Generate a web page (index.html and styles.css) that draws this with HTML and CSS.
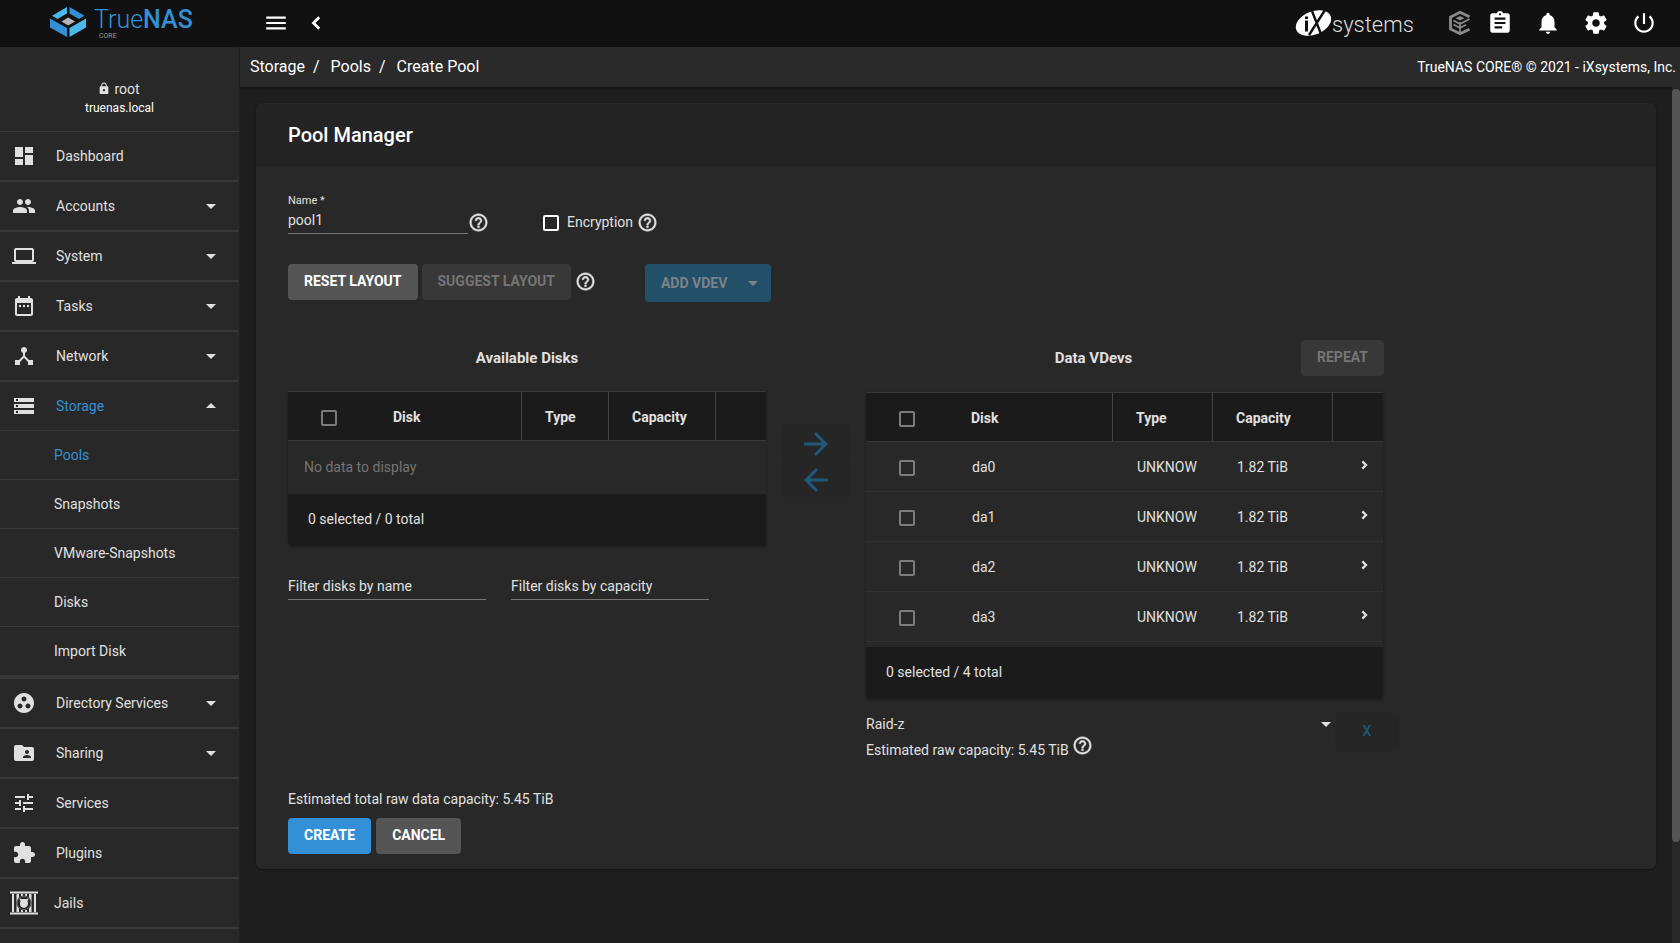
FILE: index.html
```html
<!DOCTYPE html>
<html lang="en">
<head>
<meta charset="utf-8">
<title>TrueNAS - Create Pool</title>
<link rel="stylesheet" href="styles.css">
</head>
<body>
<svg class="defs" aria-hidden="true">
  <symbol id="i-help" viewBox="0 0 24 24"><path d="M11 18h2v-2h-2v2zm1-16C6.480 2 2 6.480 2 12s4.480 10 10 10 10-4.480 10-10S17.520 2 12 2zm0 18c-4.410 0-8-3.590-8-8s3.590-8 8-8 8 3.590 8 8-3.590 8-8 8zm0-14c-2.210 0-4 1.790-4 4h2c0-1.100.9-2 2-2s2 .9 2 2c0 2-3 1.750-3 5h2c0-2.250 3-2.500 3-5 0-2.210-1.790-4-4-4z" stroke="currentColor" stroke-width=".5"/></symbol>
  <symbol id="i-down" viewBox="0 0 24 24"><path d="M7 10l5 5 5-5z"/></symbol>
  <symbol id="i-up" viewBox="0 0 24 24"><path d="M7 14l5-5 5 5z"/></symbol>
  <symbol id="i-right" viewBox="0 0 24 24"><path d="M9.500 6.500L15 12l-5.500 5.500" fill="none" stroke="currentColor" stroke-width="3.500"/></symbol>
</svg>
<div class="app">
  <header class="topbar">
    <a class="brand" href="#" aria-label="TrueNAS Core">
      <svg class="brand-mark" viewBox="0 0 36 30">
        <path fill="#4cb8ea" d="M17 0v6.500L7.500 12 2 8.800z"/>
        <path fill="#3390d6" d="M19.500 0v6.500L29 12l5.500-3.200z"/>
        <path fill="#3390d6" d="M0 11.500l17 9.500v9L0 20.500z"/>
        <path fill="#4cb8ea" d="M36 11.500L19.500 21v9L36 20.500z"/>
        <path fill="#b4b4b4" d="M18.200 10.500l6.800 4-6.800 4-6.700-4z"/>
      </svg>
      <span class="brand-name"><span class="brand-word">True<b>NAS</b></span><small>CORE</small></span>
    </a>
    <div class="topbar-main">
      <button class="icon-btn" aria-label="Toggle menu"><svg viewBox="0 0 24 24"><path d="M3 18h18v-2H3v2zm0-5h18v-2H3v2zm0-7v2h18V6H3z"/></svg></button>
      <button class="icon-btn" aria-label="Collapse menu"><svg viewBox="0 0 24 24"><path d="M15 6.700L9.700 12l5.300 5.300" fill="none" stroke="currentColor" stroke-width="2.600"/></svg></button>
      <span class="spacer"></span>
      <a class="ix" href="#" aria-label="iXsystems">
        <svg viewBox="0 0 116 28">
          <ellipse cx="18.500" cy="14" rx="18.500" ry="11.500" transform="rotate(-22 18.500 14)" fill="#fff"/>
          <path d="M10 11.500h3v11h-3zM10 7.500h3v2.500h-3z" fill="#111"/>
          <path d="M17 2l9 23M30 1L14 26" stroke="#111" stroke-width="2.400" fill="none"/>
          <text x="37" y="23" class="ix-text">systems</text>
          <path d="M112.500 11.500h2.500" stroke="#bbb" stroke-width="1"/>
        </svg>
      </a>
      <button class="icon-btn tc" aria-label="TrueCommand"><svg viewBox="0 0 24 26"><path fill="none" stroke="#8a8a8a" stroke-width="2.800" d="M22.500 6.800L13 2.200 3.500 7v12l9.500 4.800 9.500-4.600"/><path fill="#8a8a8a" d="M13 6l4.500 2.300-4.500 2.300-4.500-2.300z"/><path fill="none" stroke="#8a8a8a" stroke-width="1.700" d="M6.500 10.500L13 14l9.500-5M6.500 14.500L13 18l6-3.200M13 12v10"/></svg></button>
      <button class="icon-btn" aria-label="Task manager"><svg viewBox="0 0 24 24"><path d="M19 3h-4.180C14.400 1.840 13.300 1 12 1c-1.300 0-2.400.84-2.820 2H5c-1.100 0-2 .9-2 2v14c0 1.100.9 2 2 2h14c1.100 0 2-.9 2-2V5c0-1.100-.9-2-2-2zm-7 0c.55 0 1 .45 1 1s-.45 1-1 1-1-.45-1-1 .45-1 1-1zm2 14H7v-2h7v2zm3-4H7v-2h10v2zm0-4H7V7h10v2z"/></svg></button>
      <button class="icon-btn" aria-label="Notifications"><svg viewBox="0 0 24 24"><path d="M12 22c1.100 0 2-.9 2-2h-4c0 1.100.89 2 2 2zm6-6v-5c0-3.070-1.640-5.640-4.500-6.320V4c0-.83-.67-1.500-1.500-1.500s-1.500.67-1.500 1.500v.68C7.630 5.360 6 7.920 6 11v5l-2 2v1h16v-1l-2-2z"/></svg></button>
      <button class="icon-btn" aria-label="Settings"><svg viewBox="0 0 24 24"><path d="M19.430 12.980c.04-.32.070-.64.070-.98s-.03-.66-.07-.98l2.110-1.650c.19-.15.24-.42.12-.64l-2-3.460c-.12-.22-.39-.3-.61-.22l-2.490 1c-.52-.4-1.080-.73-1.690-.98l-.38-2.650C14.460 2.180 14.250 2 14 2h-4c-.25 0-.46.18-.49.42l-.38 2.650c-.61.25-1.170.59-1.690.98l-2.490-1c-.23-.09-.49 0-.61.22l-2 3.460c-.13.22-.07.49.12.64l2.110 1.650c-.04.32-.07.65-.07.980s.03.66.07.98l-2.110 1.650c-.19.15-.24.42-.12.64l2 3.460c.12.22.39.3.61.22l2.490-1c.52.4 1.080.73 1.690.98l.38 2.650c.03.24.24.42.49.42h4c.25 0 .46-.18.49-.42l.38-2.650c.61-.25 1.170-.59 1.690-.98l2.490 1c.23.09.49 0 .61-.22l2-3.460c.12-.22.07-.49-.12-.64l-2.110-1.650zM12 15.500c-1.930 0-3.500-1.570-3.500-3.500s1.570-3.500 3.500-3.500 3.500 1.570 3.500 3.500-1.570 3.500-3.500 3.500z"/></svg></button>
      <button class="icon-btn" aria-label="Power"><svg viewBox="0 0 24 24"><path d="M13 3h-2v10h2V3zm4.830 2.170l-1.420 1.420C17.990 7.860 19 9.810 19 12c0 3.870-3.130 7-7 7s-7-3.130-7-7c0-2.190 1.010-4.140 2.580-5.420L6.170 5.170C4.230 6.820 3 9.260 3 12c0 4.970 4.030 9 9 9s9-4.030 9-9c0-2.740-1.230-5.180-3.170-6.830z"/></svg></button>
    </div>
  </header>

  <aside class="sidebar">
    <div class="user">
      <div class="user-name"><svg viewBox="3 0 18 22"><path d="M18 8h-1V6c0-2.760-2.240-5-5-5S7 3.240 7 6v2H6c-1.100 0-2 .9-2 2v10c0 1.100.9 2 2 2h12c1.100 0 2-.9 2-2V10c0-1.100-.9-2-2-2zm-6 9c-1.100 0-2-.9-2-2s.9-2 2-2 2 .9 2 2-.9 2-2 2zm3.100-9H8.900V6c0-1.710 1.390-3.100 3.100-3.100 1.710 0 3.100 1.390 3.100 3.100v2z"/></svg>root</div>
      <div class="user-host">truenas.local</div>
    </div>
    <nav>
      <ul class="menu">
        <li><a href="#"><svg class="mi" viewBox="0 0 24 24"><path d="M3 13h8V3H3v10zm0 8h8v-6H3v6zm10 0h8V11h-8v10zm0-18v6h8V3h-8z"/></svg><span>Dashboard</span></a></li>
        <li><a href="#"><svg class="mi" viewBox="0 0 24 24"><path d="M16 11c1.660 0 2.990-1.340 2.990-3S17.660 5 16 5c-1.660 0-3 1.340-3 3s1.340 3 3 3zm-8 0c1.660 0 2.990-1.340 2.990-3S9.660 5 8 5C6.340 5 5 6.340 5 8s1.340 3 3 3zm0 2c-2.330 0-7 1.170-7 3.500V19h14v-2.500c0-2.330-4.670-3.500-7-3.500zm8 0c-.29 0-.62.02-.97.050 1.160.84 1.970 1.970 1.970 3.450V19h6v-2.500c0-2.330-4.670-3.500-7-3.500z"/></svg><span>Accounts</span><svg class="caret"><use href="#i-down"/></svg></a></li>
        <li><a href="#"><svg class="mi" viewBox="0 0 24 24"><path d="M20 18c1.100 0 1.990-.9 1.990-2L22 6c0-1.100-.9-2-2-2H4c-1.100 0-2 .9-2 2v10c0 1.100.9 2 2 2H0v2h24v-2h-4zM4 6h16v10H4V6z"/></svg><span>System</span><svg class="caret"><use href="#i-down"/></svg></a></li>
        <li><a href="#"><svg class="mi" viewBox="0 0 24 24"><path d="M9 11H7v2h2v-2zm4 0h-2v2h2v-2zm4 0h-2v2h2v-2zm2-7h-1V2h-2v2H8V2H6v2H5c-1.110 0-1.990.9-1.990 2L3 20c0 1.100.89 2 2 2h14c1.100 0 2-.9 2-2V6c0-1.100-.9-2-2-2zm0 16H5V9h14v11z"/></svg><span>Tasks</span><svg class="caret"><use href="#i-down"/></svg></a></li>
        <li><a href="#"><svg class="mi" viewBox="0 0 24 24"><path d="M17 16l-4-4V8.820C14.160 8.400 15 7.300 15 6c0-1.660-1.340-3-3-3S9 4.340 9 6c0 1.300.84 2.400 2 2.820V12l-4 4H3v5h5v-3.050l4-4.200 4 4.200V21h5v-5h-4z"/></svg><span>Network</span><svg class="caret"><use href="#i-down"/></svg></a></li>
        <li class="open"><a class="active" href="#"><svg class="mi" viewBox="0 0 24 24"><path d="M2 20h20v-4H2v4zm2-3h2v2H4v-2zM2 4v4h20V4H2zm4 3H4V5h2v2zm-4 7h20v-4H2v4zm2-3h2v2H4v-2z"/></svg><span>Storage</span><svg class="caret"><use href="#i-up"/></svg></a>
          <ul class="submenu">
            <li><a class="active" href="#">Pools</a></li>
            <li><a href="#">Snapshots</a></li>
            <li><a href="#">VMware-Snapshots</a></li>
            <li><a href="#">Disks</a></li>
            <li><a href="#">Import Disk</a></li>
          </ul>
        </li>
        <li><a href="#"><svg class="mi" viewBox="0 0 24 24"><path d="M12 2C6.480 2 2 6.480 2 12s4.480 10 10 10 10-4.480 10-10S17.520 2 12 2zM8 17.500c-1.380 0-2.500-1.120-2.500-2.500s1.120-2.500 2.500-2.500 2.500 1.120 2.500 2.500-1.120 2.500-2.500 2.500zM9.500 8c0-1.380 1.120-2.500 2.500-2.500s2.500 1.120 2.500 2.500-1.120 2.500-2.500 2.500S9.500 9.380 9.500 8zm6.500 9.500c-1.380 0-2.500-1.120-2.500-2.500s1.120-2.500 2.500-2.500 2.500 1.120 2.500 2.500-1.120 2.500-2.500 2.500z"/></svg><span>Directory Services</span><svg class="caret"><use href="#i-down"/></svg></a></li>
        <li><a href="#"><svg class="mi" viewBox="0 0 24 24"><path d="M20 6h-8l-2-2H4c-1.100 0-1.990.9-1.990 2L2 18c0 1.100.9 2 2 2h16c1.100 0 2-.9 2-2V8c0-1.100-.9-2-2-2zm-5 3c1.100 0 2 .9 2 2s-.9 2-2 2-2-.9-2-2 .9-2 2-2zm4 8h-8v-1c0-1.330 2.670-2 4-2s4 .67 4 2v1z"/></svg><span>Sharing</span><svg class="caret"><use href="#i-down"/></svg></a></li>
        <li><a href="#"><svg class="mi" viewBox="0 0 24 24"><path d="M3 17v2h6v-2H3zM3 5v2h10V5H3zm10 16v-2h8v-2h-8v-2h-2v6h2zM7 9v2H3v2h4v2h2V9H7zm14 4v-2H11v2h10zm-6-4h2V7h4V5h-4V3h-2v6z"/></svg><span>Services</span></a></li>
        <li><a href="#"><svg class="mi" viewBox="0 0 24 24"><path d="M20.500 11H19V7c0-1.100-.9-2-2-2h-4V3.500C13 2.120 11.880 1 10.500 1S8 2.120 8 3.500V5H4c-1.100 0-1.990.9-1.990 2v3.800H3.500c1.490 0 2.700 1.210 2.700 2.700s-1.210 2.700-2.700 2.700H2V20c0 1.100.9 2 2 2h3.800v-1.500c0-1.490 1.210-2.700 2.700-2.700 1.490 0 2.700 1.210 2.700 2.700V22H17c1.100 0 2-.9 2-2v-4h1.500c1.380 0 2.500-1.120 2.500-2.500S21.880 11 20.500 11z"/></svg><span>Plugins</span></a></li>
        <li><a class="jails" href="#"><svg class="mi" viewBox="0 0 28 24"><path d="M0 0h28v1H0zM0 23h28v1H0z" opacity=".5"/><path d="M0 1h28v1.500H0zM0 21.500h28V23H0zM2 3h2v18H2zM6.500 3H9v18H6.500zM19 3h2.500v18H19zM24 3h2v18h-2zM11 3h2v3h-2zM15 3h2v3h-2zM11 18h2v3h-2zM15 18h2v3h-2z"/><circle cx="14" cy="12" r="7.500" fill="#282828"/><circle cx="14" cy="12" r="6.800" fill="none" stroke="#8c8c8c" stroke-width=".6"/><path d="M9.500 7.500l2.500.8c1.200-.5 2.800-.5 4 0l2.500-.8-1 3c1.500 3-.7 6.300-3.500 6.300s-5-3-3.500-6.300z"/></svg><span>Jails</span></a></li>
        <li class="more"></li>
      </ul>
    </nav>
  </aside>

  <div class="main">
    <div class="crumbs">
      <nav class="crumb-list"><a href="#">Storage</a><i>/</i><a href="#">Pools</a><i>/</i><a href="#">Create Pool</a></nav>
      <span class="copyright">TrueNAS CORE® © 2021 - iXsystems, Inc.</span>
    </div>
    <div class="viewport">
      <main class="content">
        <form class="card">
          <h1 class="card-title">Pool Manager</h1>
          <div class="card-body">
            <div class="row-name">
              <div class="field">
                <label for="name">Name *</label>
                <input id="name" type="text" value="pool1">
              </div>
              <svg class="help"><use href="#i-help"/></svg>
              <div class="encrypt">
                <input class="check strong" id="enc" type="checkbox">
                <label for="enc">Encryption</label>
                <svg class="help"><use href="#i-help"/></svg>
              </div>
            </div>
            <div class="row-actions">
              <button type="button" class="btn">RESET LAYOUT</button>
              <button type="button" class="btn" disabled>SUGGEST LAYOUT</button>
              <svg class="help"><use href="#i-help"/></svg>
              <button type="button" class="btn add" disabled>ADD VDEV<svg class="caret"><use href="#i-down"/></svg></button>
            </div>
            <div class="disks">
              <section class="available">
                <div class="head"><h2>Available Disks</h2></div>
                <div class="table-box">
                  <table>
                    <colgroup><col class="c-check"><col><col class="a-type"><col class="a-cap"><col class="a-end"></colgroup>
                    <thead><tr><th class="sel"><input class="check" type="checkbox" aria-label="Select all available disks"></th><th>Disk</th><th>Type</th><th>Capacity</th><th></th></tr></thead>
                    <tbody><tr class="empty"><td colspan="5">No data to display</td></tr></tbody>
                  </table>
                  <div class="table-foot">0 selected / 0 total</div>
                </div>
                <div class="filters">
                  <input type="text" placeholder="Filter disks by name" aria-label="Filter disks by name">
                  <input type="text" placeholder="Filter disks by capacity" aria-label="Filter disks by capacity">
                </div>
              </section>
              <div class="movers">
                <button type="button" disabled aria-label="Move right"><svg viewBox="0 0 24 24"><path d="M12 4l-1.410 1.410L16.170 11H4v2h12.170l-5.580 5.590L12 20l8-8z"/></svg></button>
                <button type="button" disabled aria-label="Move left"><svg viewBox="0 0 24 24"><path d="M20 11H7.830l5.590-5.590L12 4l-8 8 8 8 1.410-1.410L7.830 13H20v-2z"/></svg></button>
              </div>
              <section class="vdevs">
                <div class="head"><h2>Data VDevs</h2><button type="button" class="btn" disabled>REPEAT</button></div>
                <div class="table-box">
                  <table>
                    <colgroup><col class="c-check"><col><col class="v-type"><col class="v-cap"><col class="v-end"></colgroup>
                    <thead><tr><th class="sel"><input class="check" type="checkbox" aria-label="Select all vdev disks"></th><th>Disk</th><th>Type</th><th>Capacity</th><th></th></tr></thead>
                    <tbody>
                      <tr><td class="sel"><input class="check" type="checkbox" aria-label="Select da0"></td><td>da0</td><td>UNKNOW</td><td>1.82 TiB</td><td class="more-cell"><svg><use href="#i-right"/></svg></td></tr>
                      <tr><td class="sel"><input class="check" type="checkbox" aria-label="Select da1"></td><td>da1</td><td>UNKNOW</td><td>1.82 TiB</td><td class="more-cell"><svg><use href="#i-right"/></svg></td></tr>
                      <tr><td class="sel"><input class="check" type="checkbox" aria-label="Select da2"></td><td>da2</td><td>UNKNOW</td><td>1.82 TiB</td><td class="more-cell"><svg><use href="#i-right"/></svg></td></tr>
                      <tr><td class="sel"><input class="check" type="checkbox" aria-label="Select da3"></td><td>da3</td><td>UNKNOW</td><td>1.82 TiB</td><td class="more-cell"><svg><use href="#i-right"/></svg></td></tr>
                    </tbody>
                  </table>
                  <div class="table-foot">0 selected / 4 total</div>
                </div>
                <div class="raid">
                  <div class="raid-info">
                    <div class="select-wrap"><select aria-label="VDev layout"><option>Raid-z</option></select><svg class="caret"><use href="#i-down"/></svg></div>
                    <div class="estimate">Estimated raw capacity: 5.45 TiB<svg class="help"><use href="#i-help"/></svg></div>
                  </div>
                  <button type="button" class="remove" disabled>X</button>
                </div>
              </section>
            </div>
            <p class="total">Estimated total raw data capacity: 5.45 TiB</p>
            <div class="submit">
              <button type="button" class="btn primary">CREATE</button>
              <button type="button" class="btn">CANCEL</button>
            </div>
          </div>
        </form>
      </main>
      <div class="scroll-track"><div class="scroll-thumb"></div></div>
    </div>
  </div>
</div>
</body>
</html>
```
FILE: styles.css
```css
* { box-sizing: border-box; }
body { margin: 0; background: #1e1e1e; color: #e0e0e0; font: 14px/20px Roboto, sans-serif; }
a { color: inherit; text-decoration: none; }
button, input, select { font: inherit; color: inherit; }
button { border: 0; padding: 0; background: none; }
ul { list-style: none; margin: 0; padding: 0; }
svg { fill: currentColor; flex: none; display: block; }
.defs { display: none; }
.spacer { flex: 1; }

.app { display: grid; grid-template: 47px 1fr / 240px 1fr; height: 100vh; overflow: hidden; }

.topbar { grid-column: 1 / 3; display: grid; grid-template-columns: 240px 1fr; background: #111; color: #fff; }
.brand { display: flex; align-items: flex-start; gap: 8px; padding: 7px 0 0 50px; }
.brand-mark { width: 36px; height: 30px; }
.brand-name { display: flex; flex-direction: column; color: #3390d6; }
.brand-word { font-size: 25px; line-height: 26px; font-weight: 300; }
.brand-word b { font-weight: 500; }
.brand-name small { color: #999; font-size: 7px; line-height: 6px; padding-left: 5px; }
.topbar-main { display: flex; align-items: center; padding: 0 23px 2px; }
.icon-btn { width: 26px; height: 26px; margin-right: 22px; }
.icon-btn:nth-child(1) { margin-right: 14px; }
.icon-btn:last-child { margin-right: 0; }
.icon-btn svg { width: 26px; height: 26px; }
.ix { margin-right: 35px; }
.ix svg { width: 116px; height: 28px; overflow: visible; }
.ix-text { font: 300 22px Roboto, sans-serif; fill: #ddd; }
.topbar-main .tc { margin-right: 15px; }

.sidebar { background: #282828; border-right: 1px solid #222; overflow: hidden; }
.user { height: 84px; padding-top: 32px; text-align: center; }
.user-name { display: flex; justify-content: center; align-items: center; gap: 5px; }
.user-name svg { width: 10px; height: 12px; margin-bottom: 2px; }
.user-host { font-size: 12px; line-height: 18px; color: #fff; }
.menu { border-top: 1px solid #383838; }
.menu > li { border-bottom: 2px solid #383838; }
.menu > li.open { border-bottom-width: 4px; }
.menu > li > a { display: flex; align-items: center; height: 48px; padding: 0 16px 0 12px; gap: 20px; }
.menu span { flex: 1; }
.menu .active, .menu .active span { color: #3390d6; }
.menu .mi, .menu .caret { color: #e0e0e0; }
.mi { width: 24px; height: 24px; }
.menu > li > .jails { padding-left: 10px; gap: 16px; }
.jails .mi { width: 28px; }
.menu > li.more { height: 48px; }
.caret { width: 24px; height: 24px; }
.submenu a { display: flex; align-items: center; height: 49px; padding-left: 54px; border-top: 1px solid #383838; }

.main { display: flex; flex-direction: column; min-width: 0; min-height: 0; }
.crumbs { display: flex; justify-content: space-between; align-items: center; height: 40px; padding: 0 4px 0 10px; background: #2a2a2a; color: #fff; box-shadow: 0 1px 2px rgba(0, 0, 0, .4); }
.crumb-list { font-size: 16px; }
.crumb-list i { font-style: normal; margin: 0 11px 0 8px; }
.viewport { flex: 1; display: flex; min-height: 0; overflow: hidden; }
.content { flex: 1; padding: 16px; min-width: 0; }
.scroll-track { width: 8px; background: #282828; }
.scroll-thumb { height: 88%; margin-top: 2px; border-radius: 4px; background: #555; }

.card { background: #282828; border-radius: 6px; box-shadow: 0 1px 2px rgba(0, 0, 0, .4); }
.card-title { margin: 0; padding: 20px 32px; background: #242424; border-radius: 6px 6px 0 0; color: #fff; font-size: 20px; line-height: 24px; font-weight: 500; }
.card-body { padding: 26px 32px 15px; }
.help { width: 21px; height: 21px; }

.row-name { display: flex; align-items: center; height: 41px; }
.field { width: 180px; }
.field label { display: block; padding-top: 1px; font-size: 11px; line-height: 14px; }
.field input { display: block; width: 100%; height: 26px; padding: 0 0 2px; border: 0; border-bottom: 1px solid #777; background: none; outline: 0; }
.row-name > .help { margin-top: 17px; }
.encrypt { display: flex; align-items: center; margin: 18px 0 0 54px; }
.encrypt label { margin: 0 4px 2px 8px; }
.check { appearance: none; display: block; width: 16px; height: 16px; margin: 0; border: 2px solid #7c7c7c; border-radius: 2px; }
.check.strong { border-color: #fff; }

.row-actions { display: flex; align-items: flex-start; gap: 4px; margin-top: 30px; }
.row-actions .help { margin-top: 7px; }
.btn { height: 36px; padding: 0 16px 2px; border-radius: 4px; background: #555; color: #fff; font-weight: 700; white-space: nowrap; }
.btn:disabled { background: #383838; color: #757575; }
.btn.primary { background: #3390d6; }
.btn.add:disabled { display: flex; align-items: center; gap: 14px; height: 38px; margin-left: 45px; padding: 0 6px 0 16px; background: #225069; color: #7d8387; }

.disks { display: grid; grid-template-columns: 478px 68px 533px; column-gap: 16px; margin-top: 38px; }
.head { display: flex; align-items: center; justify-content: center; height: 36px; margin-bottom: 15px; }
.head h2 { margin: 0; flex: 1; text-align: center; font-size: 15px; line-height: 20px; font-weight: 700; }
.table-box { border-radius: 0 0 4px 4px; box-shadow: 0 1px 3px rgba(0, 0, 0, .3); overflow: hidden; }
table { width: 100%; table-layout: fixed; border-collapse: separate; border-spacing: 0; }
.c-check { width: 80px; }
.a-type { width: 87px; }
.a-cap { width: 107px; }
.a-end { width: 51px; }
.v-type { width: 100px; }
.v-cap { width: 120px; }
.v-end { width: 51px; }
th { height: 50px; padding: 2px 0 0 23px; background: #1b1b1b; border: 1px solid #383838; border-width: 1px 0; text-align: left; font-weight: 700; }
th:nth-child(n+3) { border-left: 1px solid #444; }
td { height: 50px; padding: 0 0 0 25px; border-bottom: 1px solid #303030; }
th.sel, td.sel { padding: 3px 0 0 33px; }
th:nth-child(2) { padding-left: 25px; }
.empty td { height: 53px; padding: 0 16px 2px; border: 0; color: #757575; }
td.more-cell { padding: 0 0 4px 24px; }
.more-cell svg { width: 16px; height: 16px; }
.table-foot { height: 52px; padding: 15px 20px; background: #1b1b1b; }
.filters { display: flex; gap: 25px; margin-top: 26px; }
.filters input { width: 198px; height: 28px; padding: 0; border: 0; border-bottom: 1px solid #777; background: none; outline: 0; }
.filters input::placeholder { color: #e0e0e0; opacity: 1; }

.movers { margin-top: 86px; }
.movers button { display: flex; align-items: center; justify-content: center; width: 68px; height: 36px; border-radius: 4px; background: #262626; color: #21587a; }
.movers svg { width: 36px; height: 36px; }
.vdevs .head { margin: 0 15px 16px 0; }
.vdevs .head h2 { padding-left: 20px; }
.vdevs .table-box { width: 517px; }
.vdevs table { border-bottom: 5px solid #282828; }
.vdevs td:nth-child(2) { padding-left: 26px; }
.raid { display: flex; margin-top: 15px; }
.raid-info { flex: 1; }
.select-wrap { display: flex; align-items: center; height: 20px; }
.select-wrap select { appearance: none; flex: 1; padding: 0; border: 0; background: none; outline: 0; }
.select-wrap .caret { margin-right: -3px; }
.estimate { display: flex; height: 20px; margin-top: 6px; gap: 3px; }
.estimate .help { margin-top: -5px; }
.remove { width: 64px; height: 36px; padding-bottom: 2px; border-radius: 4px; background: #262626; color: #1f5878; font-weight: 500; }
.total { margin: 29px 0 9px; }
.submit { display: flex; gap: 5px; }
```
